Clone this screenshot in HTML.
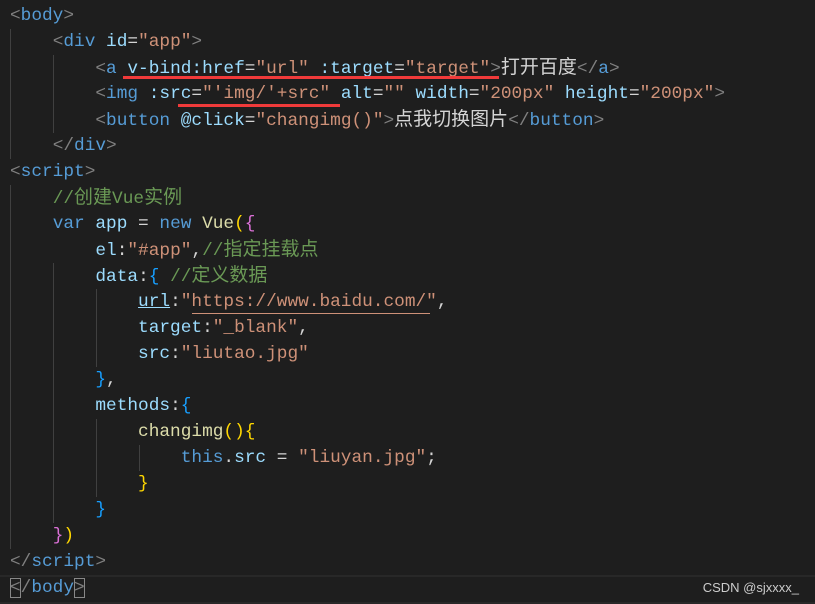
<!DOCTYPE html>
<html><head><meta charset="utf-8"><style>
body{margin:0;width:815px;height:604px;background:#1e1e1e;overflow:hidden;position:relative;font-family:"Liberation Mono","Noto Sans CJK SC",monospace;font-size:17.8px;color:#d4d4d4}
.l{position:absolute;left:10px;height:26px;line-height:26px;white-space:pre}
.g{position:absolute;width:1px;background:#404040}
.b{color:#808080}.t{color:#569cd6}.a{color:#9cdcfe}.s{color:#ce9178}.c{color:#6a9955}.k{color:#569cd6}.f{color:#dcdcaa}.y{color:#ffd700}.p{color:#da70d6}.bl{color:#179fff}
.u{position:absolute;background:#f03a3a;height:3px}
.z{font-size:19px}
</style></head><body>
<div class="g" style="left:10px;top:29px;height:130px"></div>
<div class="g" style="left:53px;top:55px;height:78px"></div>
<div class="g" style="left:10px;top:185px;height:364px"></div>
<div class="g" style="left:53px;top:263px;height:260px"></div>
<div class="g" style="left:96px;top:289px;height:78px"></div>
<div class="g" style="left:96px;top:419px;height:78px"></div>
<div class="g" style="left:139px;top:445px;height:26px"></div>
<div style="position:absolute;left:0;top:575px;width:815px;height:25px;border-top:2px solid #282828;border-bottom:2px solid #282828;background:#1e1e1e"></div>
<div class="l" style="top:3px"><span class="b">&lt;</span><span class="t">body</span><span class="b">&gt;</span></div>
<div class="l" style="top:29px">    <span class="b">&lt;</span><span class="t">div</span> <span class="a">id</span>=<span class="s">"app"</span><span class="b">&gt;</span></div>
<div class="l" style="top:55px">        <span class="b">&lt;</span><span class="t">a</span> <span class="a">v-bind:href</span>=<span class="s">"url"</span> <span class="a">:target</span>=<span class="s">"target"</span><span class="b">&gt;</span><span class="z">打开百度</span><span class="b">&lt;/</span><span class="t">a</span><span class="b">&gt;</span></div>
<div class="l" style="top:81px">        <span class="b">&lt;</span><span class="t">img</span> <span class="a">:src</span>=<span class="s">"'img/'+src"</span> <span class="a">alt</span>=<span class="s">""</span> <span class="a">width</span>=<span class="s">"200px"</span> <span class="a">height</span>=<span class="s">"200px"</span><span class="b">&gt;</span></div>
<div class="l" style="top:107px">        <span class="b">&lt;</span><span class="t">button</span> <span class="a">@click</span>=<span class="s">"changimg()"</span><span class="b">&gt;</span><span class="z">点我切换图片</span><span class="b">&lt;/</span><span class="t">button</span><span class="b">&gt;</span></div>
<div class="l" style="top:133px">    <span class="b">&lt;/</span><span class="t">div</span><span class="b">&gt;</span></div>
<div class="l" style="top:159px"><span class="b">&lt;</span><span class="t">script</span><span class="b">&gt;</span></div>
<div class="l" style="top:185px">    <span class="c">//<span class="z">创建</span>Vue<span class="z">实例</span></span></div>
<div class="l" style="top:211px">    <span class="k">var</span> <span class="a">app</span> = <span class="k">new</span> <span class="f">Vue</span><span class="y">(</span><span class="p">{</span></div>
<div class="l" style="top:237px">        <span class="a">el</span>:<span class="s">"#app"</span>,<span class="c">//<span class="z">指定挂载点</span></span></div>
<div class="l" style="top:263px">        <span class="a">data</span>:<span class="bl">{</span> <span class="c">//<span class="z">定义数据</span></span></div>
<div class="l" style="top:289px">            <span class="a" style="text-decoration:underline">url</span>:<span class="s">"https://www.baidu.com/"</span>,</div>
<div class="l" style="top:315px">            <span class="a">target</span>:<span class="s">"_blank"</span>,</div>
<div class="l" style="top:341px">            <span class="a">src</span>:<span class="s">"liutao.jpg"</span></div>
<div class="l" style="top:367px">        <span class="bl">}</span>,</div>
<div class="l" style="top:393px">        <span class="a">methods</span>:<span class="bl">{</span></div>
<div class="l" style="top:419px">            <span class="f">changimg</span><span class="y">(){</span></div>
<div class="l" style="top:445px">                <span class="k">this</span>.<span class="a">src</span> = <span class="s">"liuyan.jpg"</span>;</div>
<div class="l" style="top:471px">            <span class="y">}</span></div>
<div class="l" style="top:497px">        <span class="bl">}</span></div>
<div class="l" style="top:523px">    <span class="p">}</span><span class="y">)</span></div>
<div class="l" style="top:549px"><span class="b">&lt;/</span><span class="t">script</span><span class="b">&gt;</span></div>
<div class="l" style="top:575px"><span class="b" style="outline:1px solid #888;outline-offset:-1px">&lt;</span><span class="b">/</span><span class="t">body</span><span class="b" style="outline:1px solid #888;outline-offset:-1px">&gt;</span></div>
<div class="u" style="left:123px;top:76px;width:376px"></div>
<div class="u" style="left:178px;top:104px;width:162px"></div>
<div style="position:absolute;left:192px;top:313px;width:238px;height:1px;background:#ce9178"></div>
<div style="position:absolute;right:16px;top:578px;font-family:'Liberation Sans',sans-serif;font-size:13px;color:#ccc;line-height:20px">CSDN @sjxxxx_</div>
</body></html>
